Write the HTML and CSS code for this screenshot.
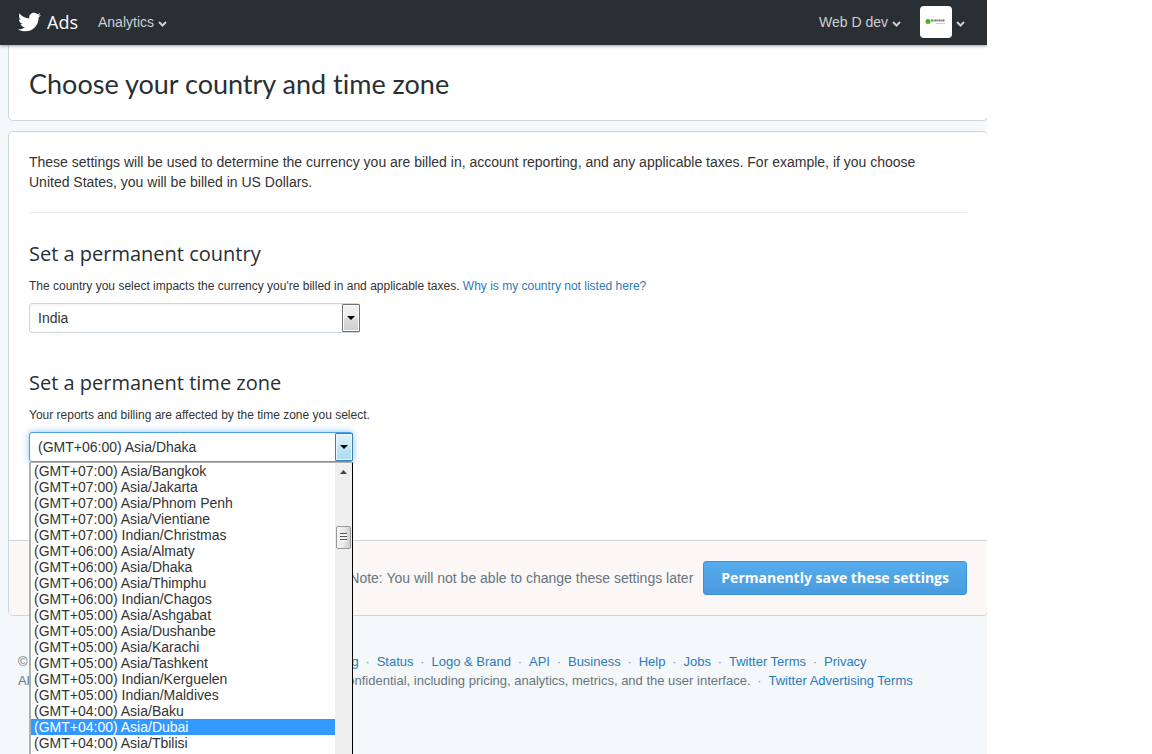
FILE: index.html
```
<!DOCTYPE html>
<html lang="en">
<head>
    <meta charset="UTF-8">
    <meta name="viewport" content="width=device-width, initial-scale=1.0">
    <title>Twitter Ads</title>
    <link rel="stylesheet" href="styles.css">
</head>
<body>
    <div class="page">
        <header class="navbar">
            <a href="#" class="brand">
                <svg class="bird" viewBox="0 2 24 20" aria-hidden="true"><path fill="#fff" d="M23.954 4.569c-.885.389-1.83.654-2.825.775 1.014-.611 1.794-1.574 2.163-2.723-.951.555-2.005.959-3.127 1.184-.896-.959-2.173-1.559-3.591-1.559-2.717 0-4.92 2.203-4.92 4.917 0 .39.045.765.127 1.124C7.691 8.094 4.066 6.13 1.64 3.161c-.427.722-.666 1.561-.666 2.475 0 1.71.87 3.213 2.188 4.096-.807-.026-1.566-.248-2.228-.616v.061c0 2.385 1.693 4.374 3.946 4.827-.413.111-.849.171-1.296.171-.314 0-.615-.03-.916-.086.631 1.953 2.445 3.377 4.604 3.417-1.68 1.319-3.809 2.105-6.102 2.105-.39 0-.779-.023-1.17-.067 2.189 1.394 4.768 2.209 7.557 2.209 9.054 0 13.999-7.496 13.999-13.986 0-.209 0-.42-.015-.63.961-.689 1.8-1.56 2.46-2.548l-.047-.02z"/></svg>
                <span>Ads</span>
            </a>
            <button type="button" class="nav-button">Analytics
                <svg class="chevron" viewBox="0 0 9 6" aria-hidden="true"><path d="M1 1l3.500 3.500L8 1" fill="none" stroke="#ccd0d3" stroke-width="2"/></svg>
            </button>
            <button type="button" class="nav-button account">Web D dev
                <svg class="chevron" viewBox="0 0 9 6" aria-hidden="true"><path d="M1 1l3.500 3.500L8 1" fill="none" stroke="#ccd0d3" stroke-width="2"/></svg>
            </button>
            <button type="button" class="nav-button profile" aria-label="Profile">
                <svg class="avatar" viewBox="0 0 32 32" aria-hidden="true">
                    <rect width="32" height="32" rx="4" fill="#fff"/>
                    <ellipse cx="8" cy="15.5" rx="2.5" ry="2.5" fill="#43b51f"/>
                    <path d="M11 14.500h14" stroke="#777" stroke-width="2" stroke-dasharray="2 .5 1 .3"/>
                    <path d="M16 17.500h9" stroke="#ccc" stroke-width="1"/>
                </svg>
                <svg class="chevron" viewBox="0 0 9 6" aria-hidden="true"><path d="M1 1l3.500 3.500L8 1" fill="none" stroke="#ccd0d3" stroke-width="2"/></svg>
            </button>
        </header>

        <main class="content">
            <div class="card title-card">
                <h1>Choose your country and time zone</h1>
            </div>

            <form class="card">
                <div class="card-body">
                    <p class="intro">These settings will be used to determine the currency you are billed in, account reporting, and any applicable taxes. For example, if you choose United States, you will be billed in US Dollars.</p>
                    <hr>

                    <section>
                        <h2><label for="country">Set a permanent country</label></h2>
                        <p class="hint">The country you select impacts the currency you're billed in and applicable taxes. <a href="#">Why is my country not listed here?</a></p>
                        <div class="select-box country-box">
                            <select id="country">
                                <option>India</option>
                            </select>
                        </div>
                    </section>

                    <section>
                        <h2><label for="timezone">Set a permanent time zone</label></h2>
                        <p class="hint">Your reports and billing are affected by the time zone you select.</p>
                        <div class="select-box timezone-box open">
                            <select id="timezone">
                                <option>(GMT+06:00) Asia/Dhaka</option>
                            </select>
                            <div class="dropdown">
                                <ul role="listbox" aria-label="Time zones">
                                    <li role="option">(GMT+07:00) Asia/Bangkok</li>
                                    <li role="option">(GMT+07:00) Asia/Jakarta</li>
                                    <li role="option">(GMT+07:00) Asia/Phnom Penh</li>
                                    <li role="option">(GMT+07:00) Asia/Vientiane</li>
                                    <li role="option">(GMT+07:00) Indian/Christmas</li>
                                    <li role="option">(GMT+06:00) Asia/Almaty</li>
                                    <li role="option">(GMT+06:00) Asia/Dhaka</li>
                                    <li role="option">(GMT+06:00) Asia/Thimphu</li>
                                    <li role="option">(GMT+06:00) Indian/Chagos</li>
                                    <li role="option">(GMT+05:00) Asia/Ashgabat</li>
                                    <li role="option">(GMT+05:00) Asia/Dushanbe</li>
                                    <li role="option">(GMT+05:00) Asia/Karachi</li>
                                    <li role="option">(GMT+05:00) Asia/Tashkent</li>
                                    <li role="option">(GMT+05:00) Indian/Kerguelen</li>
                                    <li role="option">(GMT+05:00) Indian/Maldives</li>
                                    <li role="option">(GMT+04:00) Asia/Baku</li>
                                    <li role="option" class="active" aria-selected="true">(GMT+04:00) Asia/Dubai</li>
                                    <li role="option">(GMT+04:00) Asia/Tbilisi</li>
                                </ul>
                                <div class="scrollbar">
                                    <svg class="scroll-up" viewBox="0 0 7 4" aria-hidden="true"><path d="M0 4L3.500 0 7 4z" fill="#444"/></svg>
                                    <div class="thumb"></div>
                                </div>
                            </div>
                        </div>
                    </section>
                </div>

                <div class="card-footer">
                    <span>Note: You will not be able to change these settings later</span>
                    <button type="submit" class="save">Permanently save these settings</button>
                </div>
            </form>

            <footer class="footer">
                <ul class="links">
                    <li>© 2014 Twitter Inc.</li>
                    <li><a href="#">About Twitter Ads</a></li>
                    <li><a href="#">Contacts</a></li>
                    <li><a href="#">Blog</a></li>
                    <li><a href="#">Status</a></li>
                    <li><a href="#">Logo &amp; Brand</a></li>
                    <li><a href="#">API</a></li>
                    <li><a href="#">Business</a></li>
                    <li><a href="#">Help</a></li>
                    <li><a href="#">Jobs</a></li>
                    <li><a href="#">Twitter Terms</a></li>
                    <li><a href="#">Privacy</a></li>
                </ul>
                <ul class="links">
                    <li>All of the content on this Twitter Ads page is private and confidential, including pricing, analytics, metrics, and the user interface.</li>
                    <li><a href="#">Twitter Advertising Terms</a></li>
                </ul>
            </footer>
        </main>
    </div>
</body>
</html>
```
FILE: styles.css
```
*, *::before, *::after {
    box-sizing: border-box;
}
body {
    margin: 0;
    background: #fff;
    color: #333;
    font-family: "Liberation Sans", Arial, sans-serif;
    font-size: 14px;
    line-height: 20px;
}
h1, h2, p, ul {
    margin: 0;
    padding: 0;
}
ul {
    list-style: none;
}
a {
    color: #2b7bb9;
    text-decoration: none;
}
button, select {
    font: inherit;
}

/* leaves the empty strip to the right of the page */
.page {
    margin-right: 165px;
    min-height: 100vh;
    max-height: 100vh;
    overflow: hidden;
    background: #f5f8fa;
}

/* top bar */
.navbar {
    position: relative;
    display: flex;
    align-items: center;
    height: 45px;
    padding: 0 22px 1px 18px;
    background: #292f33;
    box-shadow: 0 1px 3px rgba(0,0,0,0.4);
}
.brand {
    display: flex;
    align-items: center;
    gap: 6px;
    margin-right: 20px;
    color: #fff;
    font-family: "Open Sans", sans-serif;
    font-size: 18px;
}
.bird {
    width: 23px;
    height: 20px;
}
.nav-button {
    display: flex;
    align-items: center;
    gap: 4px;
    padding: 0;
    border: none;
    background: none;
    color: #ccd0d3;
    cursor: pointer;
}
.chevron {
    width: 9px;
    height: 6px;
    margin-top: 4px;
}
.account {
    margin-left: auto;
}
.profile {
    margin-left: 19px;
    gap: 4px;
}
.avatar {
    width: 32px;
    height: 32px;
}

/* cards */
.content {
    padding-left: 8px;
}
.card {
    margin: 0 -1px 10px 0;
    border: 1px solid #ccd6dd;
    border-radius: 5px;
    background: #fff;
}
.title-card {
    padding: 21px 20px 19px;
    border-top: none;
    border-radius: 0 0 5px 5px;
}
h1 {
    color: #292f33;
    font-family: Lato, "Open Sans", sans-serif;
    font-size: 27px;
    font-weight: 400;
    font-variant-ligatures: none;
    line-height: 35px;
}
.card-body {
    padding: 20px 20px 78px;
}
.intro {
    padding-right: 20px;
}
hr {
    margin: 20px 0 0;
    border: none;
    border-top: 1px solid #e8ecee;
}
section {
    padding-top: 29px;
}
section + section {
    padding-top: 38px;
}
h2 {
    margin-bottom: 10px;
    color: #292f33;
    font-family: "Open Sans", sans-serif;
    font-size: 20px;
    font-weight: 400;
    line-height: 24px;
}
.hint {
    margin-bottom: 7px;
    font-size: 12px;
}

/* drop-downs */
.select-box {
    position: relative;
    height: 30px;
}
.select-box select {
    width: 100%;
    height: 30px;
    padding: 0 24px 0 8px;
    border: 1px solid #ccd6dd;
    border-radius: 3px;
    background: #fff;
    box-shadow: inset 0 1px 3px rgba(0,0,0,0.06);
    color: #333;
    appearance: none;
}
/* native looking arrow button */
.select-box::before {
    content: "";
    position: absolute;
    top: 1px;
    right: 0;
    width: 18px;
    height: 28px;
    border: 1px solid #707070;
    border-radius: 1px;
    background: linear-gradient(#f2f2f2, #ebebeb 50%, #ddd 50%, #cfcfcf);
    box-shadow: inset 0 0 0 1px #fcfcfc;
    pointer-events: none;
}
.select-box::after {
    content: "";
    position: absolute;
    top: 13px;
    right: 5px;
    border: 4px solid transparent;
    border-top-color: #000;
    border-bottom: none;
    pointer-events: none;
}
.country-box {
    width: 331px;
}
.timezone-box {
    width: 324px;
}
.open select {
    border-color: #4aa0e6;
    outline: none;
    box-shadow: 0 0 7px rgba(85,172,238,0.7);
}
.open::before {
    border-color: #3c7fb1;
    background: linear-gradient(#e5f4fc, #c4e5f6 50%, #aadaf5);
    box-shadow: inset 0 0 0 1px #eaf7fe;
}
.dropdown {
    position: absolute;
    top: 30px;
    left: 0;
    z-index: 2;
    display: flex;
    width: 100%;
    border: solid #b0b0b0;
    border-width: 1px 1px 1px 2px;
    border-right-color: #000;
    background: #fff;
}
.dropdown ul {
    flex: 1;
    padding-bottom: 16px;
}
.dropdown li {
    padding-left: 3px;
    line-height: 16px;
}
.dropdown .active {
    background: #3399ff;
    color: #fff;
}
.scrollbar {
    display: flex;
    flex-direction: column;
    align-items: center;
    width: 17px;
    padding-top: 7px;
    background: #efefef;
}
.scroll-up {
    width: 7px;
    height: 4px;
}
.thumb {
    width: 15px;
    height: 23px;
    margin-top: 52px;
    padding: 6px 3px;
    border: 1px solid #979797;
    border-radius: 2px;
    background: repeating-linear-gradient(#555 0 1px, #f5f5f5 1px 3px) content-box, linear-gradient(90deg, #f5f5f5, #e8e8e8 50%, #d0d0d0);
}

/* save bar */
.card-footer {
    display: flex;
    align-items: center;
    justify-content: flex-end;
    gap: 10px;
    padding: 20px;
    border-top: 1px solid #ccd6dd;
    border-radius: 0 0 5px 5px;
    background: #fbf7f6;
    color: #66757f;
}
.save {
    height: 34px;
    padding: 0 17px;
    border: 1px solid #3b94d9;
    border-radius: 3px;
    background: linear-gradient(#55acee, #4a9bdd);
    color: #fff;
    font-family: "Open Sans", sans-serif;
    font-weight: 700;
    cursor: pointer;
}

/* page footer */
.footer {
    padding: 26px 10px;
    color: #66757f;
    font-size: 13px;
    line-height: 19px;
}
.links {
    display: flex;
    white-space: nowrap;
}
.links li + li::before {
    content: "·";
    display: inline-block;
    width: 18px;
    color: #8899a6;
    text-align: center;
}
```
